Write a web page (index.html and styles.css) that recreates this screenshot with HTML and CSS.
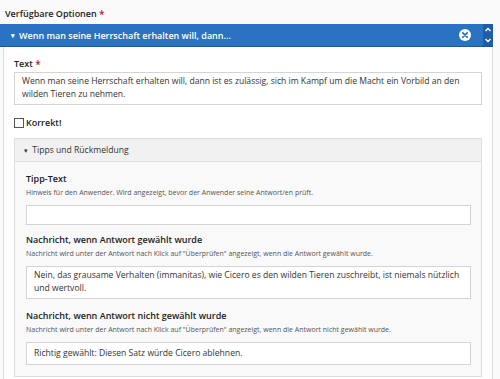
FILE: index.html
```html
<!DOCTYPE html>
<html lang="de">
<head>
    <meta charset="UTF-8">
    <title>Verfügbare Optionen</title>
    <link rel="stylesheet" href="styles.css">
</head>
<body>
    <div class="optionen">
        <div class="feld-titel">Verfügbare Optionen <span class="pflicht">*</span></div>
        <div class="option">
            <div class="option-kopf">
                <span class="pfeil">&#9662;</span>
                <span class="option-name">Wenn man seine Herrschaft erhalten will, dann...</span>
                <span class="entfernen">
                    <svg width="12" height="12" viewBox="0 0 12 12">
                        <circle cx="6" cy="6" r="6" fill="#fff"/>
                        <path d="M3.8 3.8 L8.2 8.2 M8.2 3.8 L3.8 8.2" stroke="#2a73c2" stroke-width="1.8" stroke-linecap="round"/>
                    </svg>
                </span>
                <span class="sortieren">
                    <svg width="8" height="18" viewBox="0 0 8 18">
                        <path d="M1.5 5 L4 2.5 L6.5 5" fill="none" stroke="#fff" stroke-width="1.4"/>
                        <path d="M1.5 13 L4 15.5 L6.5 13" fill="none" stroke="#fff" stroke-width="1.4"/>
                    </svg>
                </span>
            </div>
            <div class="option-inhalt">
                <label class="label">Text <span class="pflicht">*</span></label>
                <div class="eingabe mehrzeilig">Wenn man seine Herrschaft erhalten will, dann ist es zulässig, sich im Kampf um die Macht ein Vorbild an den wilden Tieren zu nehmen.</div>

                <label class="korrekt"><span class="kaestchen"></span>Korrekt!</label>

                <div class="gruppe">
                    <div class="gruppe-kopf"><span class="pfeil-klein">&#9662;</span> Tipps und Rückmeldung</div>
                    <div class="gruppe-inhalt">
                        <div class="feld">
                            <div class="label">Tipp-Text</div>
                            <div class="hinweis">Hinweis für den Anwender. Wird angezeigt, bevor der Anwender seine Antwort/en prüft.</div>
                            <div class="eingabe leer"></div>
                        </div>
                        <div class="feld">
                            <div class="label">Nachricht, wenn Antwort gewählt wurde</div>
                            <div class="hinweis">Nachricht wird unter der Antwort nach Klick auf "Überprüfen" angezeigt, wenn die Antwort gewählt wurde.</div>
                            <div class="eingabe mehrzeilig">Nein, das grausame Verhalten (immanitas), wie Cicero es den wilden Tieren zuschreibt, ist niemals nützlich und wertvoll.</div>
                        </div>
                        <div class="feld nach-textfeld">
                            <div class="label">Nachricht, wenn Antwort nicht gewählt wurde</div>
                            <div class="hinweis">Nachricht wird unter der Antwort nach Klick auf "Überprüfen" angezeigt, wenn die Antwort nicht gewählt wurde.</div>
                            <div class="eingabe">Richtig gewählt: Diesen Satz würde Cicero ablehnen.</div>
                        </div>
                    </div>
                </div>
            </div>
        </div>
    </div>
</body>
</html>
```

FILE: styles.css
```css
body {
    margin: 0;
    background: #fafafa;
    font-family: 'Open Sans', Arial, sans-serif;
    color: #333;
    font-size: 8.6px;
}
.optionen {
    width: 493px;
    padding-top: 7px;
}
.feld-titel {
    font-weight: 600;
    font-size: 9px;
    padding-left: 5px;
    height: 17px;
    color: #222;
}
.pflicht {
    color: #c4161c;
    vertical-align: top;
    font-size: 10px;
}
.option-kopf {
    display: flex;
    align-items: center;
    height: 22px;
    background: #2a73c2;
    border-bottom: 1px solid #1b5596;
    color: #fff;
    font-weight: 600;
    font-size: 9px;
}
.pfeil {
    font-size: 7px;
    margin: 0 4px 0 11px;
}
.option-name {
    flex: 1;
}
.entfernen {
    display: flex;
    margin-right: 12px;
}
.sortieren {
    display: flex;
    align-items: center;
    justify-content: center;
    width: 10px;
    height: 22px;
    background: #1f5ea6;
}
.option-inhalt {
    border-left: 1px solid #ddd;
    border-right: 1px solid #ddd;
    margin-left: 3px;
    padding: 11px 10px 2px 10px;
    background: #fff;
}
.label {
    display: block;
    font-weight: 600;
    font-size: 9px;
    color: #222;
    line-height: 12px;
}
.eingabe {
    background: #fff;
    border: 1px solid #d4d4d4;
    padding: 4px 7px;
    font-size: 8.6px;
    line-height: 13px;
    color: #333;
    margin-top: 2px;
}
.eingabe.mehrzeilig {
    padding: 2px 7px 3px;
}
.eingabe.leer {
    height: 10px;
}
.korrekt {
    display: flex;
    align-items: center;
    margin-top: 11px;
    font-weight: 600;
    font-size: 9px;
    color: #222;
}
.kaestchen {
    width: 8px;
    height: 8px;
    border: 1px solid #555;
    background: #fff;
    margin-right: 2px;
}
.gruppe {
    margin-top: 9px;
    border: 1px solid #ddd;
    background: #f9f9f9;
}
.gruppe-kopf {
    height: 22px;
    line-height: 22px;
    background: #f1f1f1;
    border-bottom: 1px solid #ddd;
    padding-left: 9px;
    font-size: 8.6px;
    color: #333;
}
.pfeil-klein {
    font-size: 7px;
    margin-right: 2px;
}
.gruppe-inhalt {
    padding: 11px 10px 11px 11px;
}
.feld + .feld {
    margin-top: 9px;
}
.feld.nach-textfeld {
    margin-top: 11px;
}
.hinweis {
    font-size: 7px;
    color: #555;
    line-height: 12px;
    margin-top: 2px;
    margin-bottom: 6px;
}
.feld .eingabe {
    margin-top: 0;
}
```
